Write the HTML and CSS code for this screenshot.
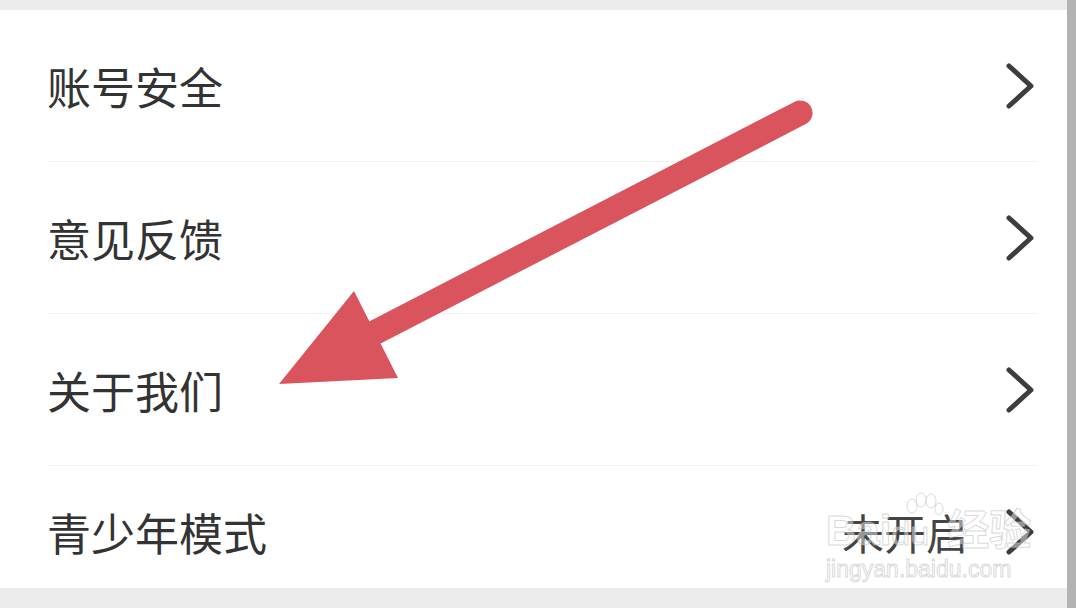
FILE: index.html
```html
<!DOCTYPE html>
<html lang="zh-CN">
<head>
    <meta charset="UTF-8">
    <meta name="viewport" content="width=device-width, initial-scale=1.0">
    <title>设置</title>
    <link rel="stylesheet" href="styles.css">
</head>
<body>
    <div class="screen">
        <div class="card">
            <div class="row">
                <span class="label">账号安全</span>
                <svg class="chevron" viewBox="0 0 30 48"><path d="M4 4 L26 24 L4 44"/></svg>
            </div>
            <div class="row">
                <span class="label">意见反馈</span>
                <svg class="chevron" viewBox="0 0 30 48"><path d="M4 4 L26 24 L4 44"/></svg>
            </div>
            <div class="row">
                <span class="label">关于我们</span>
                <svg class="chevron" viewBox="0 0 30 48"><path d="M4 4 L26 24 L4 44"/></svg>
            </div>
            <div class="row last">
                <span class="label">青少年模式</span>
                <span class="value">未开启</span>
                <svg class="chevron" viewBox="0 0 30 48"><path d="M4 4 L26 24 L4 44"/></svg>
            </div>

            <!-- red pointer drawn over the list -->
            <svg class="pointer" viewBox="0 0 1076 608">
                <line x1="800" y1="113" x2="372" y2="334"/>
                <polygon points="279,384 354,291 398,378"/>
            </svg>

            <div class="watermark">
                <svg class="wm-paw" viewBox="0 0 40 30">
                    <ellipse cx="8" cy="14" rx="5" ry="7"/>
                    <ellipse cx="17" cy="8" rx="5" ry="7"/>
                    <ellipse cx="27" cy="9" rx="5" ry="7"/>
                    <ellipse cx="35" cy="17" rx="4" ry="6"/>
                </svg>
                <span class="wm-logo">Bai<span class="wm-du">du</span>经验</span>
                <span class="wm-url">jingyan.baidu.com</span>
            </div>
        </div>
        <div class="scrollbar"></div>
    </div>
</body>
</html>
```

FILE: styles.css
```css
body {
    margin: 0;
    padding: 0;
    background-color: #ececec;
    font-family: "Noto Sans CJK SC", "Noto Sans", sans-serif;
    overflow: hidden;
}

.screen {
    display: flex;
    height: 608px;
}

.card {
    position: relative;
    flex: 1;
    background: #ffffff;
    margin-top: 10px;
    height: 578px;
}

.scrollbar {
    width: 9px;
    background: #b3b3b3;
}

.row {
    display: flex;
    align-items: center;
    height: 151px;
    margin-left: 47px;
    margin-right: 30px;
    border-bottom: 1px solid #f1f1f1;
}

.row.last {
    height: 112px;
    padding-top: 10px;
    border-bottom: none;
}

.label {
    flex: 1;
    font-size: 44px;
    color: #333333;
    line-height: 1;
}

.value {
    font-size: 42px;
    color: #444444;
    line-height: 1;
    margin-right: 37px;
}

.chevron {
    width: 30px;
    height: 48px;
    margin-right: 2px;
}

.chevron path {
    fill: none;
    stroke: #3d3d3d;
    stroke-width: 5;
    stroke-linecap: round;
    stroke-linejoin: round;
}

.pointer {
    position: absolute;
    left: 0;
    top: -10px;
    width: 1076px;
    height: 608px;
    pointer-events: none;
}

.pointer line {
    stroke: #d9545d;
    stroke-width: 25;
    stroke-linecap: round;
}

.pointer polygon {
    fill: #d9545d;
}

.watermark {
    position: absolute;
    left: 826px;
    top: 500px;
    display: flex;
    flex-direction: column;
    align-items: flex-start;
    font-family: "Liberation Sans", "Noto Sans CJK SC", sans-serif;
    color: rgba(255, 255, 255, 0.45);
    -webkit-text-stroke: 1px rgba(185, 185, 185, 0.55);
    pointer-events: none;
}

.wm-paw {
    position: absolute;
    left: 78px;
    top: -18px;
    width: 40px;
    height: 30px;
}

.wm-paw ellipse {
    fill: rgba(255, 255, 255, 0.4);
    stroke: rgba(185, 185, 185, 0.55);
    stroke-width: 1;
}

.wm-logo {
    font-size: 42px;
    font-weight: bold;
    line-height: 1;
}

.wm-du {
    font-size: 34px;
    font-weight: normal;
    margin-right: 18px;
}

.wm-url {
    font-size: 23px;
    margin-top: 6px;
    line-height: 1;
}
```
